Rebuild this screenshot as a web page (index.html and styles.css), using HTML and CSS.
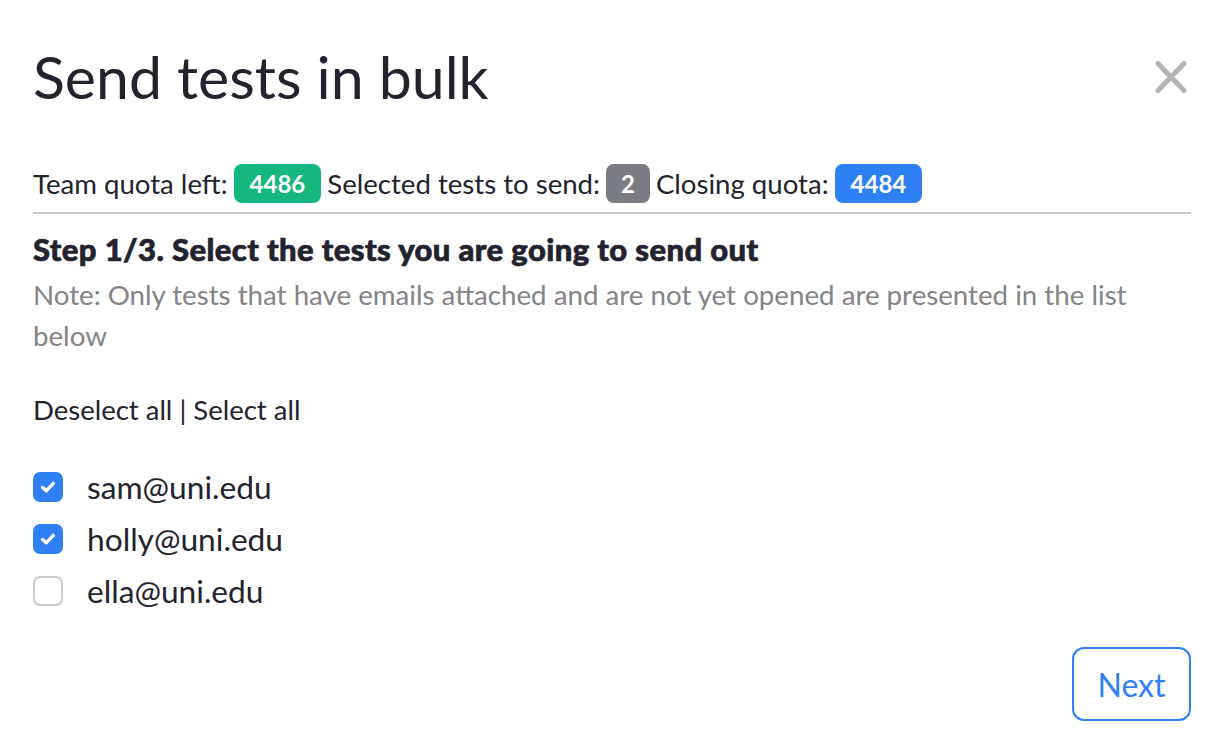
FILE: index.html
```html
<!DOCTYPE html>
<html>
<head>
<meta charset="utf-8">
<link rel="stylesheet" href="styles.css">
</head>
<body>
<div class="modal">
  <div class="header">
    <h1 class="title">Send tests in bulk</h1>
    <button class="close" aria-label="Close">
      <svg width="32" height="34" viewBox="0 0 32 34"><path d="M3 3.5 L29 30.5 M29 3.5 L3 30.5" stroke="#b3b3b5" stroke-width="5" stroke-linecap="round"/></svg>
    </button>
  </div>
  <div class="quota">
    <span>Team quota left:</span>
    <span class="badge green">4486</span>
    <span>Selected tests to send:</span>
    <span class="badge grey">2</span>
    <span>Closing quota:</span>
    <span class="badge blue">4484</span>
  </div>
  <div class="divider"></div>
  <h2 class="step">Step 1/3. Select the tests you are going to send out</h2>
  <p class="note">Note: Only tests that have emails attached and are not yet opened are presented in the list below</p>
  <div class="select-links"><span>Deselect all</span> | <span>Select all</span></div>
  <ul class="list">
    <li class="item"><span class="check on"><svg width="20" height="20" viewBox="0 0 20 20"><path d="M4.5 10.5 L8.3 13.8 L15.3 6.4" fill="none" stroke="#fff" stroke-width="3.4" stroke-linecap="round" stroke-linejoin="round"/></svg></span>sam@uni.edu</li>
    <li class="item"><span class="check on"><svg width="20" height="20" viewBox="0 0 20 20"><path d="M4.5 10.5 L8.3 13.8 L15.3 6.4" fill="none" stroke="#fff" stroke-width="3.4" stroke-linecap="round" stroke-linejoin="round"/></svg></span>holly@uni.edu</li>
    <li class="item"><span class="check"></span>ella@uni.edu</li>
  </ul>
  <div class="footer">
    <button class="next">Next</button>
  </div>
</div>
</body>
</html>
```
FILE: styles.css
```css
html, body { margin: 0; padding: 0; background: #fff; }
body { font-family: Lato, "Noto Sans", sans-serif; color: #23232f; }
.modal { padding: 0 33px; width: 1224px; box-sizing: border-box; }
.header { display: flex; justify-content: space-between; align-items: center; height: 152px; }
.title { margin: 0; font-size: 59px; font-weight: 400; }
.close { border: 0; background: none; padding: 0; margin-right: 4px; margin-top: 2px; display: flex; }
.quota { display: flex; align-items: center; gap: 6px; font-size: 27.6px; height: 46px; margin-top: 8px; }
.badge { color: #fff; font-weight: 700; border-radius: 8px; padding: 0 16px; height: 39px; line-height: 39px; font-size: 24px; }
.green { background: #14b77d; }
.grey { background: #7b7c82; padding: 0 15px; }
.blue { background: #2f7ff5; }
.divider { height: 2px; background: #c8c8ca; margin-top: 6px; }
.step { margin: 15px 0 0; font-size: 31px; font-weight: 900; line-height: 40px; letter-spacing: 0.4px; -webkit-text-stroke: 0.7px #23232f; }
.note { margin: 5px 0 0; color: #838388; font-size: 27.7px; line-height: 41px; }
.select-links { margin-top: 34px; font-size: 27.5px; line-height: 40px; }
.list { list-style: none; margin: 31px 0 0; padding: 0; }
.item { display: flex; align-items: center; height: 52px; font-size: 31.7px; }
.check { width: 30px; height: 30px; box-sizing: border-box; border: 2px solid #cbcbcd; border-radius: 7px; margin-right: 24px; display: flex; align-items: center; justify-content: center; }
.check.on { background: #2f7ff5; border-color: #2f7ff5; }
.footer { display: flex; justify-content: flex-end; margin-top: 30px; }
.next { font-family: inherit; font-size: 32px; color: #2f7ff5; background: #fff; border: 2px solid #2f7ff5; border-radius: 12px; width: 119px; height: 74px; padding: 0; }
```
